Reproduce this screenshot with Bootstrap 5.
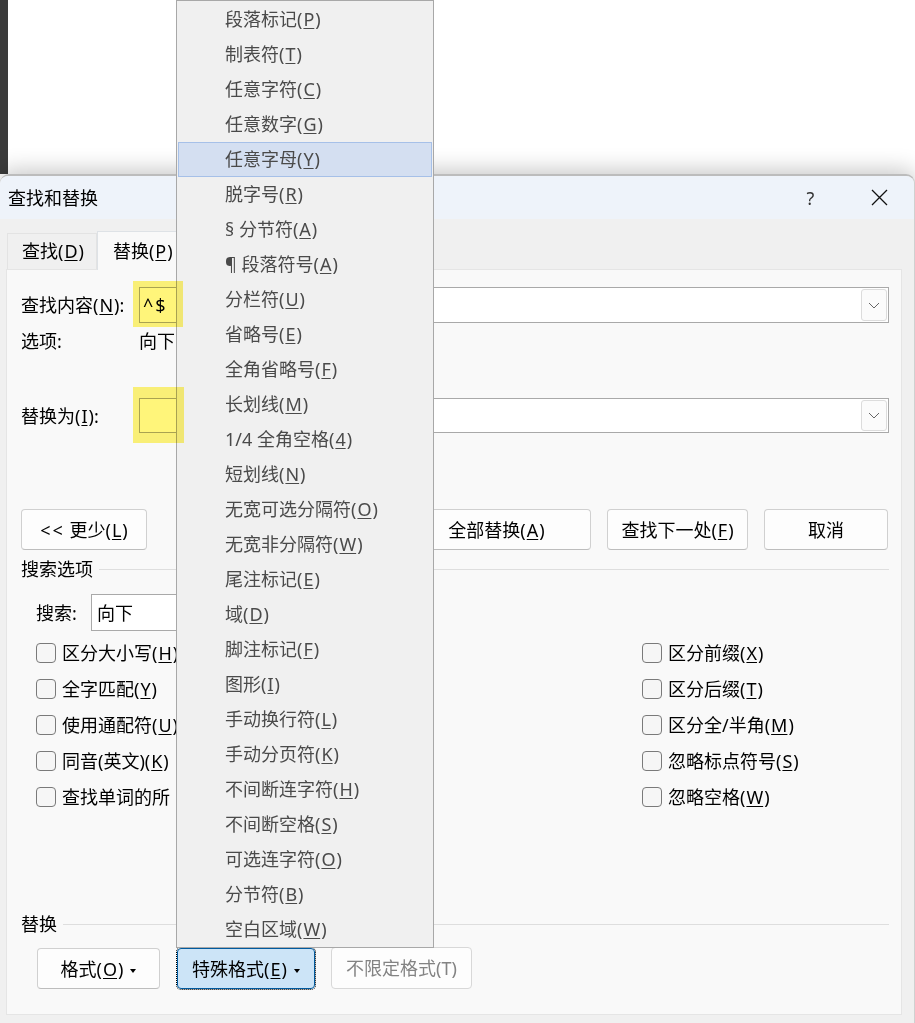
<!DOCTYPE html>
<html lang="zh-CN">
<head>
<meta charset="UTF-8">
<title>查找和替换</title>
<link href="https://cdn.jsdelivr.net/npm/bootstrap@5.3.0/dist/css/bootstrap.min.css" rel="stylesheet">
<style>
html, body { height: 1023px; overflow: hidden; }
body { background: #fff; color: #000; font: 18px/24px "Noto Sans", "Noto Sans CJK SC", sans-serif; }
u { text-underline-offset: 2px; text-decoration-thickness: 1px; margin: 0 1px; }
.desk { height: 174px; }
.desk-strip { width: 8px; height: 100%; background: #3b3b3b; }
.dialog { height: 849px; background: #f0f0f0; border-top: 2px solid #bcbcbc; border-right: 1px solid #d0d0d0; border-radius: 9px 9px 0 0; box-shadow: 0 -4px 22px rgba(0,0,0,.22); }
.titlebar { height: 43px; padding-left: 8px; background: #eef3fa; border-radius: 8px 8px 0 0; }
.title-q { width: 17px; margin-right: 52px; color: #333; }
.title-x { margin-right: 26px; }
.tabs { height: 50px; padding: 11px 0 0 7px; border: 0; align-items: flex-end; }
.tabs .nav-link { height: 36px; padding: 5px 12px 0 14px; color: #000; background: #f0f0f0; border: 1px solid #e3e3e3; border-bottom: 0; border-radius: 0; margin: 0; }
.tabs .nav-link.active { height: 39px; padding: 7px 12px 0 15px; background: #f9f9f9; color: #000; margin-bottom: -1px; position: relative; }
.panel { margin: 0 12px 0 6px; height: 746px; background: #f9f9f9; border: 1px solid #e5e5e5; padding: 0 12px 0 14px; }
.field-label { width: 118px; flex: none; }
.combo { flex: 1; background: #fff; border: 1px solid #a9a9a9; padding: 0 1px 0 3px; align-items: center; }
.combo-arrow { width: 26px; height: calc(100% - 2px); border: 1px solid #dcdcdc; border-radius: 3px; background: #fbfbfb; }
.find-row { margin-top: 17px; height: 36px; }
.find-text { letter-spacing: 2px; }
.opt-row { height: 36px; }
.replace-row { margin-top: 39px; height: 35px; }
.mark { position: absolute; left: -7px; width: 50px; background: #fff57a; mix-blend-mode: multiply; z-index: 1100; }
.mark-a { top: -7px; height: 46px; }
.mark-b { top: -12px; height: 56px; width: 51px; }
.btn-win { height: 41px; padding: 0; font-size: 18px; line-height: 24px; color: #000; background: #fdfdfd; border: 1px solid #d0d0d0; border-bottom-color: #bdbdbd; border-radius: 4px; }
.actions { margin-top: 76px; padding-right: 1px; }
.less-mark { letter-spacing: 2px; }
.w-less { width: 126px; }
.w-all { width: 189px; }
.w-next { width: 141px; }
.w-cancel { width: 124px; }
.legend { height: 20px; line-height: 20px; }
.legend::after { content: ""; flex: 1; border-top: 1px solid #dedede; margin-left: 6px; }
.legend-search { margin-top: 9px; }
.search-row { margin: 15px 0 4px 15px; height: 37px; }
.search-row .combo { flex: none; width: 200px; padding-left: 5px; height: 37px; }
.search-label { width: 55px; }
.check-col { width: 621px; padding-left: 15px; }
.check-line { height: 36px; padding: 0; margin: 0; min-height: 0; }
.check-line .form-check-input { float: none; width: 20px; height: 20px; margin: 0 6px 0 0; background-color: #f6f6f6; border: 1px solid #7a7a7a; border-radius: 4px; flex: none; }
.legend-replace { margin-top: 99px; }
.bottom-btns { margin: 14px 0 0 16px; gap: 17px; }
.w-format { width: 123px; }
.w-special { width: 138px; }
.w-none { width: 141px; margin-left: -1px; }
.dropdown-toggle::after { margin-left: 7px; vertical-align: 3px; border-top-width: 4px; border-left-width: 3.5px; border-right-width: 3.5px; }
.btn-win.open, .btn-win.open:hover { background: #cce4f7; border-color: #005a9e; outline: 1px dotted #000; }
.btn-win:disabled { opacity: 1; color: #838383; background: #fdfdfd; border-color: #d8d8d8; height: 42px; margin-top: -1px; }
.special-menu { left: -1px; bottom: 41px; width: 258px; height: 948px; padding: 1px; margin: 0; background: #f0f0f0; border: 1px solid #a8a8a8; border-radius: 0; font-size: 18px; }
.special-menu .dropdown-item { height: 35px; padding: 0 0 0 46px; color: #4a4a4a; border: 1px solid transparent; line-height: 33px; }
.special-menu .dropdown-item.active { background: #d4dff1; border-color: #a6c0e8; color: #4a4a4a; }
</style>
</head>
<body>
<div class="desk"><div class="desk-strip"></div></div>

<div class="dialog">
  <div class="titlebar d-flex align-items-center">
    <span class="flex-grow-1">查找和替换</span>
    <span class="title-q text-center">?</span>
    <svg class="title-x" width="17" height="17" viewBox="0 0 17 17"><path d="M1 1L16 16M16 1L1 16" stroke="#111" stroke-width="1.3" fill="none"/></svg>
  </div>

  <ul class="nav nav-tabs tabs">
    <li class="nav-item"><a class="nav-link" href="#">查找(<u>D</u>)</a></li>
    <li class="nav-item"><a class="nav-link active" href="#">替换(<u>P</u>)</a></li>
  </ul>

  <div class="panel">
    <div class="find-row d-flex align-items-center">
      <label class="field-label">查找内容(<u>N</u>):</label>
      <div class="combo d-flex h-100 position-relative">
        <span class="mark mark-a"></span>
        <span class="flex-grow-1 find-text">^$</span>
        <span class="combo-arrow d-flex align-items-center justify-content-center"><svg width="12" height="7" viewBox="0 0 12 7"><path d="M1 1L6 6L11 1" stroke="#666" fill="none"/></svg></span>
      </div>
    </div>
    <div class="opt-row d-flex align-items-center">
      <span class="field-label">选项:</span>
      <span>向下</span>
    </div>
    <div class="replace-row d-flex align-items-center">
      <label class="field-label">替换为(<u>I</u>):</label>
      <div class="combo d-flex h-100 position-relative">
        <span class="mark mark-b"></span>
        <span class="flex-grow-1"></span>
        <span class="combo-arrow d-flex align-items-center justify-content-center"><svg width="12" height="7" viewBox="0 0 12 7"><path d="M1 1L6 6L11 1" stroke="#666" fill="none"/></svg></span>
      </div>
    </div>

    <div class="actions d-flex justify-content-between">
      <button class="btn btn-win w-less"><span class="less-mark">&lt;&lt;</span> 更少(<u>L</u>)</button>
      <div class="d-flex gap-3">
        <button class="btn btn-win w-all">全部替换(<u>A</u>)</button>
        <button class="btn btn-win w-next">查找下一处(<u>F</u>)</button>
        <button class="btn btn-win w-cancel">取消</button>
      </div>
    </div>

    <div class="legend legend-search d-flex align-items-center">搜索选项</div>
    <div class="search-row d-flex align-items-center">
      <label class="search-label">搜索:</label>
      <div class="combo d-flex">
        <span class="flex-grow-1">向下</span>
        <span class="combo-arrow d-flex align-items-center justify-content-center"><svg width="12" height="7" viewBox="0 0 12 7"><path d="M1 1L6 6L11 1" stroke="#666" fill="none"/></svg></span>
      </div>
    </div>
    <div class="d-flex">
      <div class="check-col">
        <div class="form-check check-line d-flex align-items-center"><input class="form-check-input" type="checkbox"><label>区分大小写(<u>H</u>)</label></div>
        <div class="form-check check-line d-flex align-items-center"><input class="form-check-input" type="checkbox"><label>全字匹配(<u>Y</u>)</label></div>
        <div class="form-check check-line d-flex align-items-center"><input class="form-check-input" type="checkbox"><label>使用通配符(<u>U</u>)</label></div>
        <div class="form-check check-line d-flex align-items-center"><input class="form-check-input" type="checkbox"><label>同音(英文)(<u>K</u>)</label></div>
        <div class="form-check check-line d-flex align-items-center"><input class="form-check-input" type="checkbox"><label>查找单词的所</label></div>
      </div>
      <div>
        <div class="form-check check-line d-flex align-items-center"><input class="form-check-input" type="checkbox"><label>区分前缀(<u>X</u>)</label></div>
        <div class="form-check check-line d-flex align-items-center"><input class="form-check-input" type="checkbox"><label>区分后缀(<u>T</u>)</label></div>
        <div class="form-check check-line d-flex align-items-center"><input class="form-check-input" type="checkbox"><label>区分全/半角(<u>M</u>)</label></div>
        <div class="form-check check-line d-flex align-items-center"><input class="form-check-input" type="checkbox"><label>忽略标点符号(<u>S</u>)</label></div>
        <div class="form-check check-line d-flex align-items-center"><input class="form-check-input" type="checkbox"><label>忽略空格(<u>W</u>)</label></div>
      </div>
    </div>

    <div class="legend legend-replace d-flex align-items-center">替换</div>
    <div class="bottom-btns d-flex">
      <button class="btn btn-win dropdown-toggle w-format">格式(<u>O</u>)</button>
      <div class="position-relative">
        <button class="btn btn-win dropdown-toggle w-special open">特殊格式(<u>E</u>)</button>
        <ul class="dropdown-menu show special-menu">
          <li><a class="dropdown-item" href="#">段落标记(<u>P</u>)</a></li>
          <li><a class="dropdown-item" href="#">制表符(<u>T</u>)</a></li>
          <li><a class="dropdown-item" href="#">任意字符(<u>C</u>)</a></li>
          <li><a class="dropdown-item" href="#">任意数字(<u>G</u>)</a></li>
          <li><a class="dropdown-item active" href="#">任意字母(<u>Y</u>)</a></li>
          <li><a class="dropdown-item" href="#">脱字号(<u>R</u>)</a></li>
          <li><a class="dropdown-item" href="#">§ 分节符(<u>A</u>)</a></li>
          <li><a class="dropdown-item" href="#">¶ 段落符号(<u>A</u>)</a></li>
          <li><a class="dropdown-item" href="#">分栏符(<u>U</u>)</a></li>
          <li><a class="dropdown-item" href="#">省略号(<u>E</u>)</a></li>
          <li><a class="dropdown-item" href="#">全角省略号(<u>F</u>)</a></li>
          <li><a class="dropdown-item" href="#">长划线(<u>M</u>)</a></li>
          <li><a class="dropdown-item" href="#">1/4 全角空格(<u>4</u>)</a></li>
          <li><a class="dropdown-item" href="#">短划线(<u>N</u>)</a></li>
          <li><a class="dropdown-item" href="#">无宽可选分隔符(<u>O</u>)</a></li>
          <li><a class="dropdown-item" href="#">无宽非分隔符(<u>W</u>)</a></li>
          <li><a class="dropdown-item" href="#">尾注标记(<u>E</u>)</a></li>
          <li><a class="dropdown-item" href="#">域(<u>D</u>)</a></li>
          <li><a class="dropdown-item" href="#">脚注标记(<u>F</u>)</a></li>
          <li><a class="dropdown-item" href="#">图形(<u>I</u>)</a></li>
          <li><a class="dropdown-item" href="#">手动换行符(<u>L</u>)</a></li>
          <li><a class="dropdown-item" href="#">手动分页符(<u>K</u>)</a></li>
          <li><a class="dropdown-item" href="#">不间断连字符(<u>H</u>)</a></li>
          <li><a class="dropdown-item" href="#">不间断空格(<u>S</u>)</a></li>
          <li><a class="dropdown-item" href="#">可选连字符(<u>O</u>)</a></li>
          <li><a class="dropdown-item" href="#">分节符(<u>B</u>)</a></li>
          <li><a class="dropdown-item" href="#">空白区域(<u>W</u>)</a></li>
        </ul>
      </div>
      <button class="btn btn-win w-none" disabled>不限定格式(T)</button>
    </div>
  </div>
</div>
<script src="https://cdn.jsdelivr.net/npm/bootstrap@5.3.0/dist/js/bootstrap.bundle.min.js"></script>
</body>
</html>
